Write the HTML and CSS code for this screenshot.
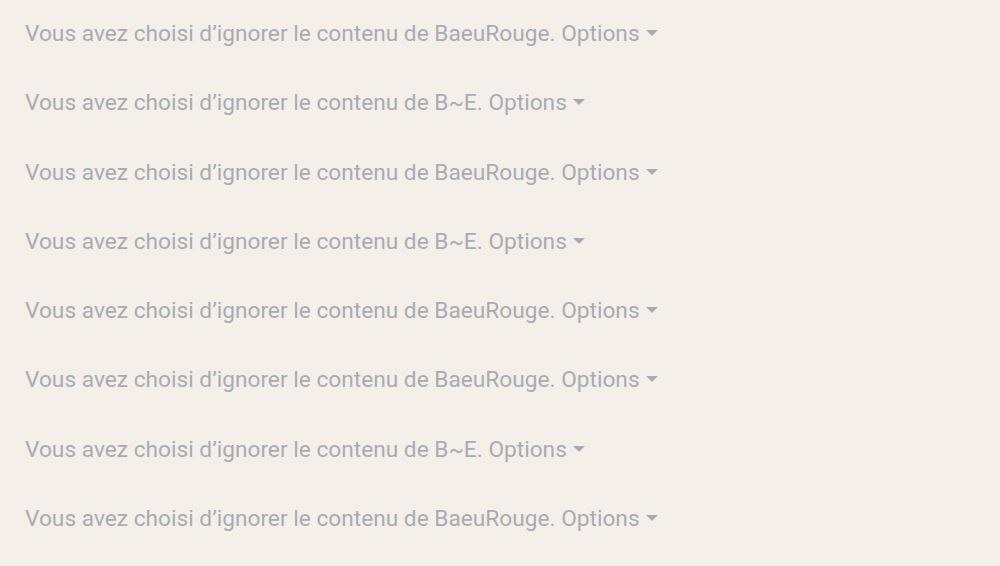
FILE: index.html
```html
<!DOCTYPE html>
<html lang="fr">
<head>
	<meta charset="UTF-8">
	<title>Contenu ignoré</title>
	<link rel="stylesheet" href="styles.css">
</head>
<body>
	<div class="feed">
		<p class="ignored">Vous avez choisi d’ignorer le contenu de BaeuRouge. <span class="options">Options<span class="caret"></span></span></p>
		<p class="ignored">Vous avez choisi d’ignorer le contenu de B~E. <span class="options">Options<span class="caret"></span></span></p>
		<p class="ignored">Vous avez choisi d’ignorer le contenu de BaeuRouge. <span class="options">Options<span class="caret"></span></span></p>
		<p class="ignored">Vous avez choisi d’ignorer le contenu de B~E. <span class="options">Options<span class="caret"></span></span></p>
		<p class="ignored">Vous avez choisi d’ignorer le contenu de BaeuRouge. <span class="options">Options<span class="caret"></span></span></p>
		<p class="ignored">Vous avez choisi d’ignorer le contenu de BaeuRouge. <span class="options">Options<span class="caret"></span></span></p>
		<p class="ignored">Vous avez choisi d’ignorer le contenu de B~E. <span class="options">Options<span class="caret"></span></span></p>
		<p class="ignored">Vous avez choisi d’ignorer le contenu de BaeuRouge. <span class="options">Options<span class="caret"></span></span></p>
	</div>
</body>
</html>
```

FILE: styles.css
```css
* {
	margin: 0;
	padding: 0;
	box-sizing: border-box;
}

html, body {
	height: 100%;
}

body {
	background: #f4f0e9;
	font-family: Roboto, "Liberation Sans", sans-serif;
	color: #a7acb4;
	overflow: hidden;
}

.feed {
	padding: 19px 25px 0;
}

.ignored {
	font-size: 22.7px;
	line-height: 30px;
	height: 69.3px;
	white-space: nowrap;
}

.caret {
	display: inline-block;
	width: 0;
	height: 0;
	margin-left: 6px;
	border-left: 6.5px solid transparent;
	border-right: 6.5px solid transparent;
	border-top: 6.5px solid #a7acb4;
	vertical-align: 5px;
}
```
